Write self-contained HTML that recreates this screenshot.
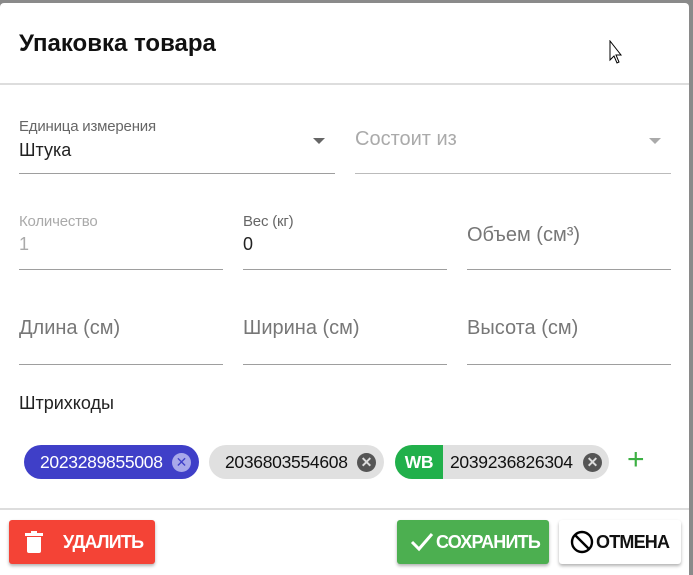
<!DOCTYPE html><html><head><style>
body{margin:0;width:693px;height:575px;background:#8a8a8a;font-family:"Liberation Sans",Arial,sans-serif;position:relative;overflow:hidden}
.d{position:absolute;left:0;top:3px;width:689px;height:572px;background:#fff;border-radius:4px 4px 0 0}
.a{position:absolute;white-space:nowrap}
.ln{position:absolute;height:1px;background:#9e9e9e}
.lab{font-size:15px;color:#666;letter-spacing:-0.2px}
.val{font-size:18px;color:#222}
.ph{font-size:20px;color:#777}
.chip{position:absolute;top:442px;height:34px;border-radius:17px;font-size:17.5px;line-height:34px;overflow:hidden;letter-spacing:-0.3px}
.x{position:absolute;top:8px;width:19px;height:19px;border-radius:50%;color:#ddd;font-size:14px;line-height:19px;text-align:center;letter-spacing:0}
.btn{position:absolute;top:517px;height:44px;border-radius:3px;box-shadow:0 2px 3px rgba(0,0,0,.3);font-weight:bold;font-size:18px;line-height:44px;letter-spacing:-0.8px}
</style></head><body><div class="d">
<div class="a" style="left:19px;top:27px;font-size:24px;font-weight:bold;color:#111">Упаковка товара</div>
<svg class="a" style="left:609px;top:37px" width="16" height="26" viewBox="0 0 16 26"><path d="M1 1V20L5 16L8 23L10 22L7 15H12Z" fill="#fff" stroke="#000" stroke-width="1"/></svg>
<div class="ln" style="left:0;top:80px;width:689px;height:2px;background:#ddd"></div>
<div class="a lab" style="left:19px;top:115px">Единица измерения</div>
<div class="a val" style="left:19px;top:137px">Штука</div>
<div class="a" style="left:313px;top:135px;border:6px solid transparent;border-top:6px solid #666"></div>
<div class="ln" style="left:19px;top:170px;width:316px"></div>
<div class="a ph" style="left:355px;top:125px;color:#aaa">Состоит из</div>
<div class="a" style="left:649px;top:135px;border:6px solid transparent;border-top:6px solid #aaa"></div>
<div class="ln" style="left:355px;top:170px;width:316px;background:#bbb"></div>
<div class="a lab" style="left:19px;top:210px;color:#aaa">Количество</div>
<div class="a val" style="left:19px;top:231px;color:#aaa">1</div>
<div class="ln" style="left:19px;top:266px;width:204px"></div>
<div class="a lab" style="left:243px;top:210px">Вес (кг)</div>
<div class="a val" style="left:243px;top:231px">0</div>
<div class="ln" style="left:243px;top:266px;width:204px"></div>
<div class="a ph" style="left:467px;top:221px">Объем (см³)</div>
<div class="ln" style="left:467px;top:266px;width:204px"></div>
<div class="a ph" style="left:19px;top:314px">Длина (см)</div>
<div class="ln" style="left:19px;top:361px;width:204px"></div>
<div class="a ph" style="left:243px;top:314px">Ширина (см)</div>
<div class="ln" style="left:243px;top:361px;width:204px"></div>
<div class="a ph" style="left:467px;top:314px">Высота (см)</div>
<div class="ln" style="left:467px;top:361px;width:204px"></div>
<div class="a" style="left:19px;top:390px;font-size:18px;color:#222">Штрихкоды</div>
<div class="chip" style="left:24px;width:175px;background:#3f3fc8;color:#fff"><span style="margin-left:16px">2023289855008</span><div class="x" style="left:148px;background:#a8a8ea;color:#3f3fc8">✕</div></div>
<div class="chip" style="left:209px;width:175px;background:#e0e0e0;color:#111"><span style="margin-left:16px">2036803554608</span><div class="x" style="left:148px;background:#555;font-weight:bold">✕</div></div>
<div class="chip" style="left:395px;width:214px;background:#e0e0e0;color:#111"><span style="display:inline-block;width:48px;background:#21b04b;color:#fff;text-align:center;font-weight:bold">WB</span><span style="margin-left:7px">2039236826304</span><div class="x" style="left:188px;background:#555;font-weight:bold">✕</div></div>
<div class="a" style="left:627px;top:440px;font-size:30px;color:#3cb043">+</div>
<div class="ln" style="left:0;top:505px;width:689px;height:2px;background:#ddd"></div>
<div class="btn" style="left:9px;width:146px;background:#f44336;color:#fff"><svg style="position:absolute;left:16px;top:11px" width="18" height="22" viewBox="0 0 18 22"><rect x="0" y="2" width="18" height="3" fill="#fff"/><rect x="6" y="0" width="6" height="3" fill="#fff"/><path d="M2 6H16V20Q16 22 14 22H4Q2 22 2 20Z" fill="#fff"/></svg><span style="position:absolute;left:54px">УДАЛИТЬ</span></div>
<div class="btn" style="left:397px;width:152px;background:#4caf50;color:#fff"><svg style="position:absolute;left:13px;top:12px" width="24" height="20" viewBox="0 0 24 20"><path d="M2 10L9 17L22 2" fill="none" stroke="#fff" stroke-width="3"/></svg><span style="position:absolute;left:39px">СОХРАНИТЬ</span></div>
<div class="btn" style="left:559px;width:122px;background:#fff;color:#111"><svg style="position:absolute;left:11px;top:10px" width="24" height="24" viewBox="0 0 24 24"><circle cx="12" cy="12" r="10" fill="none" stroke="#000" stroke-width="2.4"/><path d="M5 5L19 19" stroke="#000" stroke-width="2.4"/></svg><span style="position:absolute;left:37px">ОТМЕНА</span></div>
</div></body></html>
